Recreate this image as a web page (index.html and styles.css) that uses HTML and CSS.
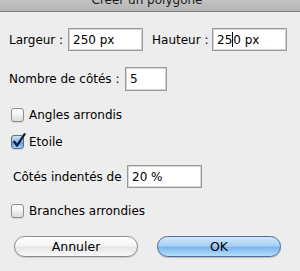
FILE: index.html
```html
<!DOCTYPE html>
<html lang="fr">
<head>
<meta charset="utf-8">
<title>Créer un polygone</title>
<link rel="stylesheet" href="styles.css">
</head>
<body>
<div class="dialog">
  <div class="titlebar"><span class="title">Créer un polygone</span></div>
  <div class="row row-size">
    <span class="label l-largeur">Largeur :</span>
    <div class="field f-size">250 px</div>
    <span class="label l-hauteur">Hauteur :</span>
    <div class="field f-size">25<span class="caret"></span>0 px</div>
  </div>
  <div class="row row-sides">
    <span class="label l-sides">Nombre de côtés :</span>
    <div class="field f-sides">5</div>
  </div>
  <div class="check c-angles">
    <span class="box"></span><span class="ctext">Angles arrondis</span>
  </div>
  <div class="check c-etoile">
    <span class="box checked">
      <svg class="tick" width="16" height="16" viewBox="0 0 16 16"><path d="M3.2 8.6 L6 12.6 L13.6 1.2" fill="none" stroke="#0e1a33" stroke-width="2.2" stroke-linecap="round" stroke-linejoin="round"/></svg>
    </span><span class="ctext">Etoile</span>
  </div>
  <div class="row row-indent">
    <span class="label l-indent">Côtés indentés de</span>
    <div class="field f-indent">20 %</div>
  </div>
  <div class="check c-branches">
    <span class="box"></span><span class="ctext">Branches arrondies</span>
  </div>
  <div class="buttons">
    <div class="btn btn-cancel">Annuler</div>
    <div class="btn btn-ok">OK</div>
  </div>
</div>
</body>
</html>
```
FILE: styles.css
```css
html, body {
  margin: 0;
  padding: 0;
  background: #ededed;
}
body {
  width: 300px;
  height: 271px;
  overflow: hidden;
  font-family: "DejaVu Sans", "Liberation Sans", sans-serif;
  font-size: 12px;
  color: #000;
}
.dialog {
  display: flex;
  flex-direction: column;
}
.titlebar {
  height: 11px;
  overflow: hidden;
  background: linear-gradient(#c2c2c2, #b6b6b6);
  border-bottom: 1px solid #7c7c7c;
  text-align: center;
}
.title {
  display: block;
  line-height: 14px;
  margin-top: -7px;
  margin-left: -6px;
  color: #1a1a1a;
}
.row {
  display: flex;
  align-items: center;
  padding-left: 9px;
}
.label {
  flex: none;
  white-space: nowrap;
}
.field {
  box-sizing: border-box;
  flex: none;
  background: #fff;
  border: 1px solid #9a9a9a;
  box-shadow: inset 0 0 0 1px #d6d6d6;
  display: flex;
  align-items: center;
  padding-left: 4px;
  white-space: nowrap;
}
.caret {
  display: inline-block;
  width: 1px;
  height: 15px;
  background: #000;
  margin: 0 0 0 0;
}
.row-size { margin-top: 16px; }
.l-largeur { width: 59px; }
.l-hauteur { width: 60px; margin-left: 9px; }
.f-size { width: 75px; height: 23px; }
.row-sides { margin-top: 16px; }
.l-sides { width: 116px; }
.f-sides { width: 42px; height: 24px; }
.row-indent { margin-top: 17px; padding-left: 13px; }
.l-indent { width: 114px; }
.f-indent { width: 75px; height: 23px; }
.check {
  display: flex;
  align-items: center;
  padding-left: 11px;
  height: 13px;
}
.c-angles { margin-top: 17px; }
.c-etoile { margin-top: 14px; }
.c-branches { margin-top: 16px; }
.box {
  box-sizing: border-box;
  position: relative;
  flex: none;
  width: 13px;
  height: 14px;
  border: 1px solid #8e8e8e;
  border-radius: 3px;
  background: linear-gradient(#ffffff, #f2f2f2 50%, #dcdcdc);
  box-shadow: 0 1px 0 rgba(0,0,0,0.08);
}
.box.checked {
  border-color: #5a6f8e;
  background: linear-gradient(#cfe3f7, #8bb9e9 50%, #5e9ae0 55%, #9fd0f7);
}
.tick {
  position: absolute;
  left: -1px;
  top: -3px;
}
.ctext {
  margin-left: 5px;
  white-space: nowrap;
}
.buttons {
  display: flex;
  margin-top: 19px;
  padding-left: 14px;
  gap: 19px;
}
.btn {
  box-sizing: border-box;
  width: 124px;
  height: 21px;
  border-radius: 11px;
  display: flex;
  align-items: center;
  justify-content: center;
  font-size: 12.5px;
}
.btn-cancel {
  border: 1px solid #8a8a8a;
  background: linear-gradient(#ffffff, #f6f6f6 45%, #e6e6e6 55%, #f8f8f8);
  box-shadow: 0 1px 1px rgba(0,0,0,0.15);
}
.btn-ok {
  border: 1px solid #4e6d98;
  background: linear-gradient(#d3e8fb, #a7d0f5 45%, #7fb8ee 55%, #b3def9);
  box-shadow: 0 1px 1px rgba(0,0,0,0.2);
}
```
